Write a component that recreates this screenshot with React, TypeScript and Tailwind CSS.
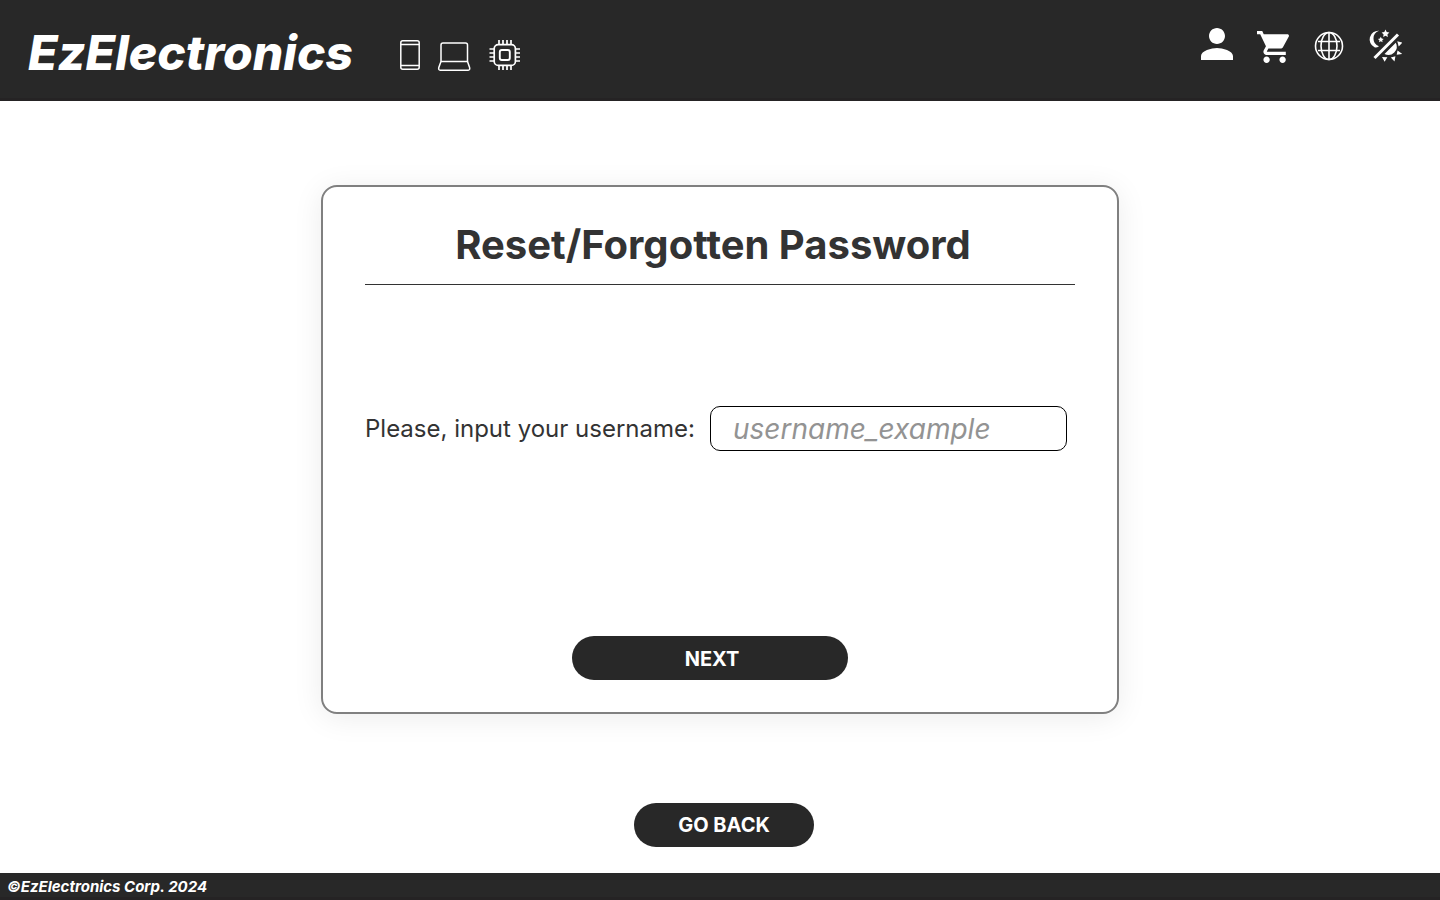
import React from "react";

function PhoneIcon() {
  return (
    <svg viewBox="0 0 20 30" className="h-[30px] w-5" fill="none" stroke="currentColor" strokeWidth="1.5">
      <rect x="0.8" y="0.8" width="18.4" height="28.4" rx="2" />
      <path d="M1 4.5h18M1 25.5h18" />
    </svg>
  );
}

function LaptopIcon() {
  return (
    <svg viewBox="0 0 33 30" className="h-[30px] w-[33px] overflow-visible" fill="none" stroke="currentColor" strokeWidth="1.5">
      <path d="M3 21.500V5a2 2 0 0 1 2-2h22.500a2 2 0 0 1 2 2v16.500z" strokeLinejoin="round" />
      <path d="M3 21.500L.8 27.500q-.6 2.700 1.400 2.700h28q2 0 1.400-2.700l-2.100-6" />
    </svg>
  );
}

function ChipIcon() {
  return (
    <svg viewBox="0 0 32 30" className="h-[30px] w-8" fill="none" stroke="currentColor" strokeWidth="1.7">
      <rect x="5.2" y="4.6" width="21.2" height="20.8" rx="4" />
      <rect x="10.8" y="10" width="10" height="10" rx="2" strokeWidth="1.9" />
      <path d="M10 0v4.500M14 0v4.500M18 0v4.500M22 0v4.500M10 25.500v4.500M14 25.500v4.500M18 25.500v4.500M22 25.500v4.500M.5 9h4.500M.5 13h4.500M.5 17h4.500M.5 21h4.500M26.500 9h4.500M26.500 13h4.500M26.500 17h4.500M26.500 21h4.500" />
    </svg>
  );
}

function PersonIcon() {
  return (
    <svg viewBox="4 4 16 16" className="size-8" fill="currentColor">
      <path d="M12 12c2.210 0 4-1.790 4-4s-1.790-4-4-4-4 1.790-4 4 1.790 4 4 4zm0 2c-2.670 0-8 1.340-8 4v2h16v-2c0-2.660-5.330-4-8-4z" />
    </svg>
  );
}

function CartIcon() {
  return (
    <svg viewBox="1 2 20 20" className="size-8" fill="currentColor">
      <path d="M7 18c-1.100 0-1.990.9-1.990 2S5.900 22 7 22s2-.9 2-2-.9-2-2-2zM1 2v2h2l3.600 7.590-1.350 2.450c-.16.280-.25.610-.25.960 0 1.100.9 2 2 2h12v-2H7.420c-.14 0-.25-.11-.25-.25l.03-.12.9-1.630h7.450c.75 0 1.410-.41 1.750-1.030L20.880 5.480C21.250 4.820 20.760 4 20 4H5.210l-.94-2H1zm16 16c-1.100 0-1.990.9-1.990 2s.89 2 1.990 2 2-.9 2-2-.9-2-2-2z" />
    </svg>
  );
}

function GlobeIcon() {
  return (
    <svg viewBox="0 0 30 30" className="size-[30px]" fill="none" stroke="currentColor" strokeWidth="1.6">
      <circle cx="15" cy="15" r="13.500" />
      <ellipse cx="15" cy="15" rx="8" ry="13.500" />
      <path d="M15 1.400v27.200M4 10.500h22M4 19.500h22" />
    </svg>
  );
}

function ThemeIcon() {
  return (
    <svg viewBox="0 0 34 34" className="size-[34px] shrink-0" fill="currentColor">
      <path d="M11 1.800A8.700 8.700 0 0 0 6.500 18.300Q8.500 19 11 17.300A8.200 8.200 0 0 1 11 1.800z" />
      <path d="M17.500.6l1.200 2.500 2.700.4-2 1.900.5 2.700-2.400-1.300-2.400 1.300.5-2.700-2-1.900 2.700-.4zM12.800 7.700l.9 1.900 2 .3-1.500 1.400.4 2-1.800-1-1.800 1 .4-2-1.500-1.400 2-.3z" />
      <path d="M6.500 29L30 5.500" stroke="currentColor" strokeWidth="3" />
      <path d="M16.500 25L27.800 13.700A8.400 8.400 0 0 1 16.500 25z" />
      <path d="M29.300 12.300l5 1.300-3.600 3.800zM29.500 21.500l4.800 3.500-5.600.8zM22.800 28.500l4.600-1.300-.9 5.200zM14 28l5.400.2-2.800 4.500z" />
    </svg>
  );
}

const iconButton = "flex size-8 cursor-pointer items-center justify-center text-white";

export default function App() {
  return (
    <div className="flex min-h-screen flex-col bg-white font-['Inter',sans-serif] text-[#333333]">
      <header className="flex items-start justify-between border-b-3 border-[#252324] bg-[#282828] pt-7 pr-[39px] pb-5 pl-7 text-white">
        <div className="flex items-center">
          <a href="#home" className="text-5xl leading-[50px] font-extrabold italic">EzElectronics</a>
          <nav aria-label="Categories" className="ml-[47px] flex items-center gap-[18px] pt-1">
            <a href="#phones" aria-label="Smartphones"><PhoneIcon /></a>
            <a href="#laptops" aria-label="Laptops"><LaptopIcon /></a>
            <a href="#appliances" aria-label="Appliances"><ChipIcon /></a>
          </nav>
        </div>
        <div className="flex h-9 items-center gap-6">
          <button type="button" aria-label="Account" className="flex h-9 w-8 cursor-pointer items-start text-white"><PersonIcon /></button>
          <button type="button" aria-label="Cart" className="flex h-9 w-8 cursor-pointer items-end pb-px text-white"><CartIcon /></button>
          <button type="button" aria-label="Language" className={iconButton}><GlobeIcon /></button>
          <button type="button" aria-label="Theme" className={iconButton}><ThemeIcon /></button>
        </div>
      </header>

      <main className="flex grow flex-col items-center px-6 pt-[84px] pb-[26px]">
        <form
          onSubmit={(event) => event.preventDefault()}
          className="flex w-full max-w-[798px] flex-col rounded-2xl border-2 border-[#808080] px-[42px] pt-[31px] pb-8 shadow-[0_4px_30px_rgba(0,0,0,0.08)]"
        >
          <h1 className="border-b border-[#333333] pr-[14px] pb-3 text-center text-[40px] leading-[54px] font-bold">
            Reset/Forgotten Password
          </h1>
          <div className="mt-[121px] flex items-center justify-between pr-2">
            <label htmlFor="username" className="text-2xl">Please, input your username:</label>
            <input
              id="username"
              type="text"
              placeholder="username_example"
              className="h-[45px] w-[357px] rounded-[10px] border border-black pr-6 pl-[22px] text-[28px] italic outline-none placeholder:text-[#939393]"
            />
          </div>
          <button type="submit" className="mt-[185px] mr-5 h-11 w-[276px] cursor-pointer self-center rounded-full bg-[#282828] pt-0.5 pl-1 text-xl font-bold text-white">
            NEXT
          </button>
        </form>
        <button type="button" className="mt-[89px] ml-2 h-11 w-[180px] cursor-pointer rounded-full bg-[#282828] text-xl font-bold text-white">
          GO BACK
        </button>
      </main>

      <footer className="border-b-3 border-[#252324] bg-[#282828] px-[7px] pt-[3px] text-[15px] leading-[21px] font-bold text-white italic">
        ©EzElectronics Corp. 2024
      </footer>
    </div>
  );
}
